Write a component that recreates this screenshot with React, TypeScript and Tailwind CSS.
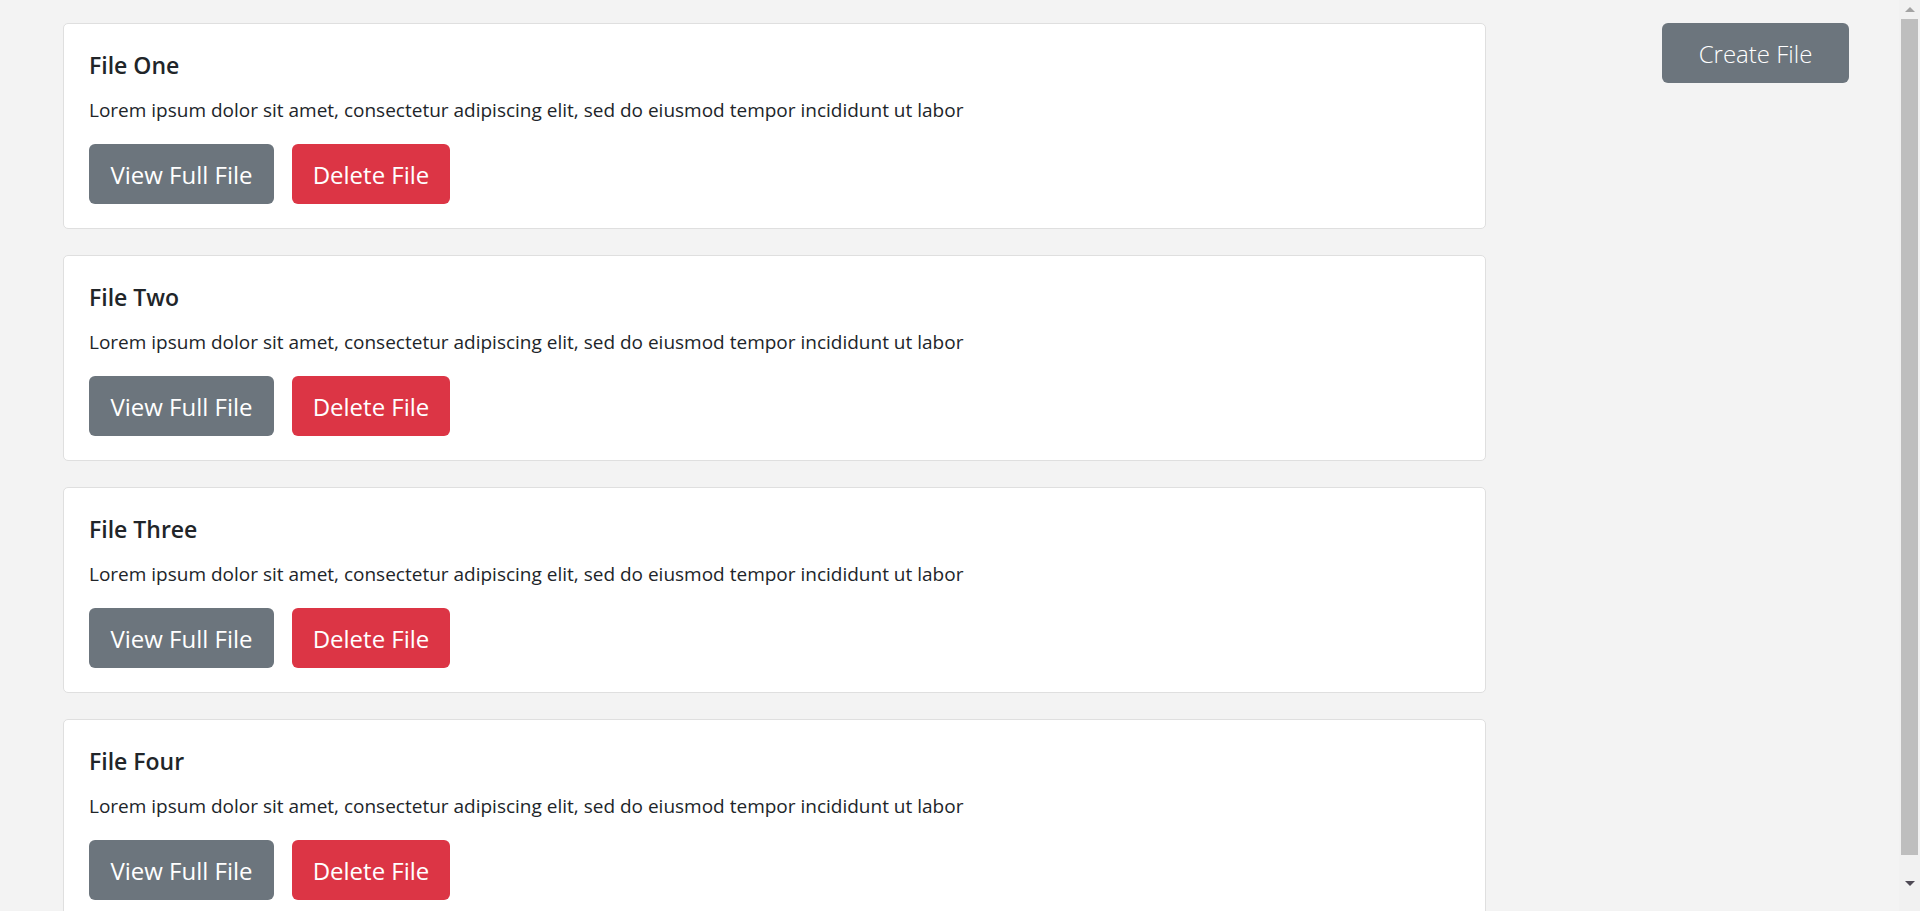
const files = [
  { id: 1, title: 'File One' },
  { id: 2, title: 'File Two' },
  { id: 3, title: 'File Three' },
  { id: 4, title: 'File Four' },
];

const LOREM =
  'Lorem ipsum dolor sit amet, consectetur adipiscing elit, sed do eiusmod tempor incididunt ut labor';

function FileCard({ title }: { title: string }) {
  return (
    <div className="mb-[26px] rounded-[5px] border border-[#dfdfdf] bg-white px-[25px] pt-[26px] pb-[24px]">
      <h5 className="mb-[15px] text-[23px] leading-[30px] font-semibold text-[#212529]">{title}</h5>
      <p className="mb-[19px] text-[19px] leading-[30px] text-[#212529]">{LOREM}</p>
      <div className="flex gap-[18px]">
        <button className="h-[60px] w-[185px] rounded-[6px] bg-[#6c757d] pt-[2px] text-[24px] text-white">
          View Full File
        </button>
        <button className="h-[60px] w-[158px] rounded-[6px] bg-[#dc3545] pt-[2px] text-[24px] text-white">
          Delete File
        </button>
      </div>
    </div>
  );
}

// stand-in for the browser scrollbar seen in the screenshot
function Scrollbar() {
  return (
    <div className="fixed top-0 right-0 flex h-screen w-[21px] flex-col items-center bg-[#f1f1f1]">
      <div className="flex h-[19px] items-center justify-center">
        <div className="h-0 w-0 border-x-[5px] border-b-[5px] border-x-transparent border-b-[#a3a3a3]" />
      </div>
      <div className="h-[836px] w-[17px] bg-[#bebebe]" />
      <div className="flex flex-1 items-center justify-center">
        <div className="h-0 w-0 border-x-[5px] border-t-[5px] border-x-transparent border-t-[#4f4a55]" />
      </div>
    </div>
  );
}

export default function App() {
  return (
    <div
      className="min-h-screen bg-[#f3f3f3] pt-[23px] pb-[5px]"
      style={{ fontFamily: '"Segoe UI", "Open Sans", "Noto Sans", sans-serif' }}
    >
      <div className="flex">
        <div className="ml-[63px] w-[1423px]">
          {files.map((f) => (
            <FileCard key={f.id} title={f.title} />
          ))}
        </div>
        <div className="ml-[176px]">
          <button className="h-[60px] w-[187px] rounded-[6px] bg-[#6c757d] pt-[2px] text-[24px] font-light text-white">
            Create File
          </button>
        </div>
      </div>
      <Scrollbar />
    </div>
  );
}
